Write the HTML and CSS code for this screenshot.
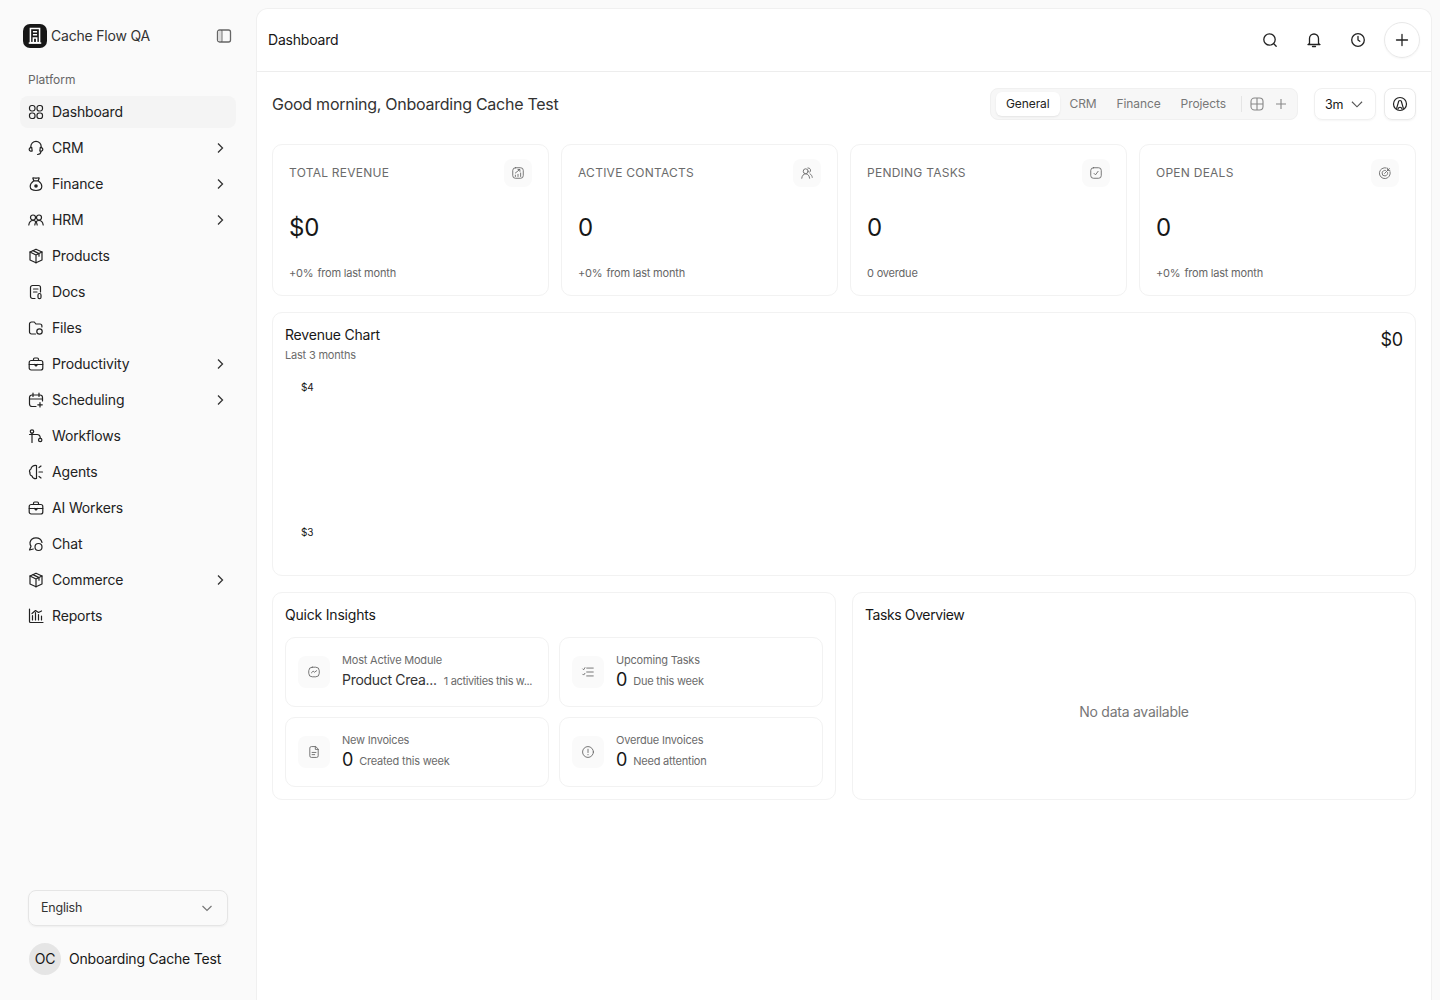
FILE: index.html
```html
<!DOCTYPE html>
<html lang="en">
<head>
  <meta charset="UTF-8">
  <meta name="viewport" content="width=device-width, initial-scale=1.0">
  <title>Dashboard</title>
  <link rel="stylesheet" href="styles.css">
</head>
<body>
  <aside class="sidebar">
    <div class="brand">
      <span class="brand-logo">
        <svg viewBox="0 0 24 24" width="20" height="20" fill="none" stroke="#fff" stroke-width="1.8"><rect x="6.500" y="3" width="11" height="17"/><path d="M9.500 7h5M9.500 10.500h5" /><path d="M10 20v-5.500h4V20" /><path d="M4.500 20.500h15" /></svg>
      </span>
      <span class="brand-name">Cache Flow QA</span>
      <svg class="collapse" viewBox="0 0 16 16" width="16" height="16" fill="none" stroke="#666" stroke-width="1.3"><rect x="1.500" y="2" width="13" height="12" rx="2"/><path d="M5.800 2v12"/><path d="M2 3h3.500v10H2z" fill="#ddd" stroke="none"/></svg>
    </div>

    <div class="nav-label">Platform</div>
    <nav class="nav">
      <a class="nav-item active">
        <svg class="nav-icon" viewBox="0 0 16 16"><rect x="1.500" y="1.500" width="5.500" height="5.500" rx="2.200"/><rect x="9" y="1.500" width="5.500" height="5.500" rx="2.200"/><rect x="1.500" y="9" width="5.500" height="5.500" rx="2.200"/><rect x="9" y="9" width="5.500" height="5.500" rx="2.200"/></svg>
        <span>Dashboard</span>
      </a>
      <a class="nav-item">
        <svg class="nav-icon" viewBox="0 0 16 16"><path d="M2.800 7.500V6.500a5.200 5.200 0 0 1 10.400 0v1"/><path d="M3.700 7.300 4.200 11c-1.400.5-2.900-.2-3-1.500-.1-1.200 1-2.200 2.500-2.200z"/><path d="M12.300 7.300 11.800 11c1.400.5 2.900-.2 3-1.500.1-1.200-1-2.200-2.500-2.200z"/><path d="M13 11.500c-.2 1.800-1.600 3-3.500 3"/></svg>
        <span>CRM</span>
        <svg class="chev" viewBox="0 0 16 16"><path d="M6 3.500 10.500 8 6 12.500"/></svg>
      </a>
      <a class="nav-item">
        <svg class="nav-icon" viewBox="0 0 16 16"><path d="M5.800 4.800 4.800 2c1-.6 1.800.2 3.200.2S10.200 1.400 11.200 2l-1 2.800"/><path d="M5.800 4.800h4.400c2 1.400 3.600 3.600 3.600 5.800 0 2.800-2.200 3.900-5.800 3.900s-5.800-1.100-5.800-3.900c0-2.200 1.600-4.400 3.600-5.800z"/><circle cx="8" cy="10" r="1.800" fill="#222" stroke="none"/></svg>
        <span>Finance</span>
        <svg class="chev" viewBox="0 0 16 16"><path d="M6 3.500 10.500 8 6 12.500"/></svg>
      </a>
      <a class="nav-item">
        <svg class="nav-icon" viewBox="0 0 16 16"><circle cx="5" cy="5.500" r="2.500"/><circle cx="11" cy="5.500" r="2.500"/><path d="M.8 13c.4-2.800 2-4.500 4.200-4.500S8.800 10.200 9.200 13"/><path d="M6.800 13c.4-2.800 2-4.500 4.200-4.500s3.800 1.700 4.200 4.500"/></svg>
        <span>HRM</span>
        <svg class="chev" viewBox="0 0 16 16"><path d="M6 3.500 10.500 8 6 12.500"/></svg>
      </a>
      <a class="nav-item">
        <svg class="nav-icon" viewBox="0 0 16 16"><path d="M8 1.200 14 4v8l-6 2.800L2 12V4z"/><path d="M2 4l6 3 6-3M8 7v7.800M5 2.600l6 3v2.600"/></svg>
        <span>Products</span>
      </a>
      <a class="nav-item">
        <svg class="nav-icon" viewBox="0 0 16 16"><path d="M7 14.500H4.500a2 2 0 0 1-2-2v-9a2 2 0 0 1 2-2h6a2 2 0 0 1 2 2V8"/><path d="M5.500 5h4.500M5.500 8H9"/><rect x="10" y="9.500" width="3" height="5.200" rx="1.500"/></svg>
        <span>Docs</span>
      </a>
      <a class="nav-item">
        <svg class="nav-icon" viewBox="0 0 16 16"><path d="M7.500 14H3.500a2 2 0 0 1-2-2V4a2 2 0 0 1 2-2h2.800l1.600 2h4a2 2 0 0 1 2 2v1"/><circle cx="11.500" cy="11.500" r="2.700"/></svg>
        <span>Files</span>
      </a>
      <a class="nav-item">
        <svg class="nav-icon" viewBox="0 0 16 16"><rect x="1.200" y="4.500" width="13.600" height="9.500" rx="2"/><path d="M5.500 4.500V3.200a1.200 1.200 0 0 1 1.200-1.200h2.600a1.200 1.200 0 0 1 1.200 1.200v1.300"/><path d="M1.200 8.500h13.600"/><path d="M6.500 8.500 8 10l1.500-1.500"/></svg>
        <span>Productivity</span>
        <svg class="chev" viewBox="0 0 16 16"><path d="M6 3.500 10.500 8 6 12.500"/></svg>
      </a>
      <a class="nav-item">
        <svg class="nav-icon" viewBox="0 0 16 16"><path d="M8 14.500H4a2.500 2.500 0 0 1-2.500-2.500V5.500A2.500 2.500 0 0 1 4 3h8a2.500 2.500 0 0 1 2.500 2.500V9"/><path d="M5 1.200v3.300M11 1.200v3.300M1.500 7h13M12 10.500v4.500M9.800 12.800h4.500"/></svg>
        <span>Scheduling</span>
        <svg class="chev" viewBox="0 0 16 16"><path d="M6 3.500 10.500 8 6 12.500"/></svg>
      </a>
      <a class="nav-item">
        <svg class="nav-icon" viewBox="0 0 16 16"><circle cx="4" cy="3.500" r="1.700"/><circle cx="12.200" cy="12" r="1.700"/><path d="M4 5.200v9.300"/><path d="M1.500 6.500H9a3 3 0 0 1 3.200 3v.8"/></svg>
        <span>Workflows</span>
      </a>
      <a class="nav-item">
        <svg class="nav-icon" viewBox="0 0 16 16"><path d="M8.500 1.500v13c-2 .5-4-.5-4.500-2.500-1.500-.5-2.500-2-2-3.500C1 7.500 1.500 5.500 3 5c0-2 2.500-4 5.500-3.500z"/><path d="M11 3.500l2-1.500M11 8h3.500M11 12.500l2 1.500"/></svg>
        <span>Agents</span>
      </a>
      <a class="nav-item">
        <svg class="nav-icon" viewBox="0 0 16 16"><rect x="1.200" y="4.500" width="13.600" height="9.500" rx="2"/><path d="M5.500 4.500V3.200a1.200 1.200 0 0 1 1.200-1.200h2.600a1.200 1.200 0 0 1 1.200 1.200v1.300"/><path d="M1.200 8.500h13.600"/><path d="M6.500 8.500 8 10l1.500-1.500"/></svg>
        <span>AI Workers</span>
      </a>
      <a class="nav-item">
        <svg class="nav-icon" viewBox="0 0 16 16"><path d="M14 6.500A6.200 6.200 0 0 0 2 6.500c-.1 1.500.3 2.700 1 3.700L1.500 14l3.800-1"/><circle cx="10.500" cy="11" r="3.500"/></svg>
        <span>Chat</span>
      </a>
      <a class="nav-item">
        <svg class="nav-icon" viewBox="0 0 16 16"><path d="M8 1.200 14 4v8l-6 2.800L2 12V4z"/><path d="M2 4l6 3 6-3M8 7v7.800M5 2.600l6 3v2.600"/></svg>
        <span>Commerce</span>
        <svg class="chev" viewBox="0 0 16 16"><path d="M6 3.500 10.500 8 6 12.500"/></svg>
      </a>
      <a class="nav-item">
        <svg class="nav-icon" viewBox="0 0 16 16"><path d="M1.500 1v12.500a1 1 0 0 0 1 1H15"/><path d="M4.500 12V7.500M7.500 12V4.500M10.500 12V6.500M13.500 12V8M4 5.500 7.500 2.500l3 2 3-1.500"/></svg>
        <span>Reports</span>
      </a>
    </nav>

    <div class="sidebar-foot">
      <div class="lang">
        <span class="lang-name">English</span>
        <svg class="lang-chev" viewBox="0 0 16 16"><path d="M3.500 6 8 10.500 12.500 6"/></svg>
      </div>
      <div class="user">
        <span class="avatar">OC</span>
        <span class="user-name">Onboarding Cache Test</span>
      </div>
    </div>
  </aside>

  <main class="main">
    <header class="topbar">
      <h1 class="page-title">Dashboard</h1>
      <div class="top-actions">
        <button class="top-btn"><svg viewBox="0 0 16 16" class="top-icon"><circle cx="7.500" cy="7.500" r="5.700"/><path d="m11.800 11.800 2.400 2.400"/></svg></button>
        <button class="top-btn"><svg viewBox="0 0 16 16" class="top-icon"><path d="M3.500 11.500V6.500a4.500 4.500 0 0 1 9 0v5l1.500 1H2z"/><path d="M6.500 14.500h3"/></svg></button>
        <button class="top-btn"><svg viewBox="0 0 16 16" class="top-icon"><circle cx="8" cy="8" r="6.300"/><path d="M8 4.500V8l1.800 1.300"/></svg></button>
        <button class="top-add"><svg viewBox="0 0 16 16" class="top-icon"><path d="M8 2.500v11M2.500 8h11"/></svg></button>
      </div>
    </header>

    <div class="content">
      <div class="welcome">
        <h2 class="greeting">Good morning, Onboarding Cache Test</h2>
        <div class="tabs">
          <button class="tab tab-on">General</button>
          <button class="tab">CRM</button>
          <button class="tab">Finance</button>
          <button class="tab">Projects</button>
          <span class="tab-sep"></span>
          <svg class="tab-icon" viewBox="0 0 16 16"><rect x="2" y="2" width="12" height="12" rx="3.500"/><path d="M8 2v12M2 8h12"/></svg>
          <svg class="tab-icon tab-plus" viewBox="0 0 16 16"><path d="M8 3v10M3 8h10"/></svg>
        </div>
        <div class="range">3m <svg class="range-chev" viewBox="0 0 16 16"><path d="M3.500 6 8 10.500 12.500 6"/></svg></div>
        <button class="ai-btn"><svg viewBox="0 0 16 16" class="ai-icon"><circle cx="8" cy="8" r="6.500"/><path d="M4.500 12.800 6.500 6a1.500 1.500 0 0 1 3 0l2 6.800"/><path d="M6 13.500c-.2-3 4.200-3 4 0"/></svg></button>
      </div>

      <section class="stats">
        <div class="card stat">
          <div class="stat-head">
            <span class="stat-label">TOTAL REVENUE</span>
            <span class="stat-icon"><svg viewBox="0 0 16 16" class="mini"><rect x="2" y="2" width="12" height="12" rx="3"/><path d="M5 12v-1.500M8 12V9.500M11 12V8M5 8l5-4M8 4h2.200v2.200"/></svg></span>
          </div>
          <div class="stat-value">$0</div>
          <div class="stat-note"><span>+0%</span><span>from last month</span></div>
        </div>
        <div class="card stat">
          <div class="stat-head">
            <span class="stat-label">ACTIVE CONTACTS</span>
            <span class="stat-icon"><svg viewBox="0 0 16 16" class="mini"><circle cx="6.500" cy="6" r="2.800"/><path d="M2 14c.3-3 2-5 4.500-5S10.700 11 11 14"/><path d="M9 2.200a2.800 2.800 0 0 1 2 5M11.500 9c1.500.8 2.300 2.300 2.500 4"/></svg></span>
          </div>
          <div class="stat-value">0</div>
          <div class="stat-note"><span>+0%</span><span>from last month</span></div>
        </div>
        <div class="card stat">
          <div class="stat-head">
            <span class="stat-label">PENDING TASKS</span>
            <span class="stat-icon"><svg viewBox="0 0 16 16" class="mini"><rect x="2" y="2" width="12" height="12" rx="3"/><path d="m5.800 8.500 1.600 1.600 3-4"/></svg></span>
          </div>
          <div class="stat-value">0</div>
          <div class="stat-note"><span>0 overdue</span></div>
        </div>
        <div class="card stat">
          <div class="stat-head">
            <span class="stat-label">OPEN DEALS</span>
            <span class="stat-icon"><svg viewBox="0 0 16 16" class="mini"><path d="M9.500 2.200A6.200 6.200 0 1 0 13.800 6.500"/><path d="M8.500 5A3.200 3.200 0 1 0 11 7.500"/><path d="M7.500 8.500 13 3M11 2.500V5h2.500"/></svg></span>
          </div>
          <div class="stat-value">0</div>
          <div class="stat-note"><span>+0%</span><span>from last month</span></div>
        </div>
      </section>

      <section class="card chart">
        <div class="chart-head">
          <div>
            <h3 class="card-title">Revenue Chart</h3>
            <p class="chart-sub">Last 3 months</p>
          </div>
          <div class="chart-total">$0</div>
        </div>
        <div class="chart-axis">
          <span>$4</span>
          <span>$3</span>
        </div>
      </section>

      <section class="bottom">
        <div class="card panel">
          <h3 class="card-title">Quick Insights</h3>
          <div class="insights">
            <div class="insight">
              <span class="insight-icon"><svg viewBox="0 0 16 16" class="mini"><rect x="2" y="2.500" width="12" height="11" rx="4"/><path d="m5 9 2-2 1.500 1.300L11 6.500"/></svg></span>
              <div class="insight-body">
                <div class="insight-label">Most Active Module</div>
                <div class="insight-row"><span class="insight-name">Product Crea...</span><span class="insight-note insight-cut">1 activities this w...</span></div>
              </div>
            </div>
            <div class="insight">
              <span class="insight-icon"><svg viewBox="0 0 16 16" class="mini"><path d="M6.500 3.500H14M6.500 8H14M6.500 12.500H14M2 4.500 3 5.500 4.500 3M2 10.500l1 1 1.500-2"/></svg></span>
              <div class="insight-body">
                <div class="insight-label">Upcoming Tasks</div>
                <div class="insight-row"><span class="insight-num">0</span><span class="insight-note">Due this week</span></div>
              </div>
            </div>
            <div class="insight">
              <span class="insight-icon"><svg viewBox="0 0 16 16" class="mini"><path d="M9.500 1.800H5a1.800 1.800 0 0 0-1.800 1.800v8.800A1.800 1.800 0 0 0 5 14.200h6a1.800 1.800 0 0 0 1.800-1.800V5z"/><path d="M9.500 1.800V5h3.300M5.800 8.500h4.400M5.800 11h3"/></svg></span>
              <div class="insight-body">
                <div class="insight-label">New Invoices</div>
                <div class="insight-row"><span class="insight-num">0</span><span class="insight-note">Created this week</span></div>
              </div>
            </div>
            <div class="insight">
              <span class="insight-icon"><svg viewBox="0 0 16 16" class="mini"><circle cx="8" cy="8" r="6.200"/><path d="M8 4.800v3.800M8 10.800v.4"/></svg></span>
              <div class="insight-body">
                <div class="insight-label">Overdue Invoices</div>
                <div class="insight-row"><span class="insight-num">0</span><span class="insight-note">Need attention</span></div>
              </div>
            </div>
          </div>
        </div>
        <div class="card panel tasks">
          <h3 class="card-title tasks-title">Tasks Overview</h3>
          <div class="empty">No data available</div>
        </div>
      </section>
    </div>
  </main>
</body>
</html>
```

FILE: styles.css
```css
/* dashboard page */
* {
  box-sizing: border-box;
}

html, body {
  height: 100%;
}

body {
  margin: 0;
  height: 1000px;
  overflow: hidden;
  display: flex;
  background-color: #fafafa;
  color: #171717;
  font-family: Inter, "Noto Sans", sans-serif;
  font-size: 14px;
  letter-spacing: -0.2px;
}

button {
  font: inherit;
  letter-spacing: inherit;
  color: inherit;
  background: none;
  border: none;
  padding: 0;
}

h1, h2, h3, p {
  margin: 0;
  font-weight: 400;
}

/* sidebar */
.sidebar {
  width: 256px;
  flex: none;
  display: flex;
  flex-direction: column;
  padding: 24px 20px 25px;
}

.brand {
  display: flex;
  align-items: center;
  height: 24px;
  margin-left: 3px;
}

.brand-logo {
  width: 24px;
  height: 24px;
  border-radius: 7px;
  background-color: #171717;
  display: flex;
  align-items: center;
  justify-content: center;
}

.brand-name {
  margin-left: 4px;
  padding-bottom: 2px;
  flex: 1;
  color: #333;
}

.collapse {
  margin-right: 4px;
}

.nav-label {
  margin: 23px 0 0 8px;
  font-size: 12px;
  line-height: 18px;
  letter-spacing: 0;
  color: #666;
}

.nav {
  margin-top: 7px;
  display: flex;
  flex-direction: column;
  gap: 4px;
}

.nav-item {
  height: 32px;
  display: flex;
  align-items: center;
  gap: 8px;
  padding: 0 8px;
  border-radius: 8px;
  color: #222;
  letter-spacing: -0.15px;
}

.nav-item span {
  padding-bottom: 2px;
}

.active {
  background-color: #f4f4f4;
}

.nav-icon {
  width: 16px;
  height: 16px;
  fill: none;
  stroke: #222;
  stroke-width: 1.2;
  stroke-linecap: round;
  stroke-linejoin: round;
}

.chev {
  width: 16px;
  height: 16px;
  margin-left: auto;
  fill: none;
  stroke: #333;
  stroke-width: 1.3;
}

.sidebar-foot {
  margin-top: auto;
}

.lang {
  margin-left: 8px;
  width: 200px;
  height: 36px;
  display: flex;
  align-items: center;
  justify-content: space-between;
  padding: 0 12px;
  border: 1px solid #e5e5e5;
  border-radius: 8px;
  box-shadow: 0 1px 2px rgba(0, 0, 0, 0.05);
  font-size: 12.5px;
  color: #333;
}

.lang-name {
  padding-bottom: 2px;
}

.lang-chev {
  width: 16px;
  height: 16px;
  fill: none;
  stroke: #777;
  stroke-width: 1.2;
}

.user {
  margin: 17px 0 0 9px;
  display: flex;
  align-items: center;
  gap: 8px;
}

.avatar {
  width: 32px;
  height: 32px;
  padding-bottom: 2px;
  border-radius: 50%;
  background-color: #e5e5e5;
  display: flex;
  align-items: center;
  justify-content: center;
}

.user-name {
  padding-bottom: 2px;
}

/* main */
.main {
  margin-top: 8px;
  width: 1176px;
  flex: none;
  background-color: #fff;
  border: 1px solid #f0f0f0;
  border-bottom: none;
  border-radius: 12px 12px 0 0;
}

.topbar {
  height: 63px;
  display: flex;
  align-items: center;
  justify-content: space-between;
  padding: 0 11px 0 11px;
  border-bottom: 1px solid #ededed;
}

.page-title {
  font-size: 14px;
  padding-bottom: 2px;
}

.top-actions {
  display: flex;
  align-items: center;
  gap: 8px;
}

.top-btn {
  width: 36px;
  height: 36px;
  display: flex;
  align-items: center;
  justify-content: center;
}

.top-add {
  width: 36px;
  height: 36px;
  border: 1px solid #e8e8e8;
  border-radius: 50%;
  display: flex;
  align-items: center;
  justify-content: center;
  box-shadow: 0 1px 2px rgba(0, 0, 0, 0.04);
}

.top-icon {
  width: 16px;
  height: 16px;
  fill: none;
  stroke: #222;
  stroke-width: 1.3;
  stroke-linecap: round;
  stroke-linejoin: round;
}

.content {
  padding: 16px 15px;
}

.welcome {
  display: flex;
  align-items: center;
  height: 32px;
}

.greeting {
  flex: 1;
  font-size: 16px;
  letter-spacing: -0.26px;
  color: #333;
}

.tabs {
  width: 308px;
  height: 32px;
  display: flex;
  align-items: center;
  padding: 0 5px;
  background-color: #f7f7f7;
  border: 1px solid #f0f0f0;
  border-radius: 8px;
}

.tab {
  height: 24px;
  padding: 0 10px 2px;
  border-radius: 6px;
  font-size: 12px;
  letter-spacing: -0.1px;
  color: #777;
}

.tab-on {
  background-color: #fff;
  color: #222;
  box-shadow: 0 1px 2px rgba(0, 0, 0, 0.08);
}

.tab-sep {
  width: 1px;
  height: 16px;
  margin: 0 7px 0 5px;
  background-color: #e5e5e5;
}

.tab-icon {
  width: 16px;
  height: 16px;
  fill: none;
  stroke: #888;
  stroke-width: 1.1;
}

.tab-plus {
  margin-left: 8px;
}

.range {
  width: 62px;
  height: 32px;
  margin-left: 16px;
  display: flex;
  align-items: center;
  gap: 4px;
  padding-left: 10px;
  border: 1px solid #f0f0f0;
  border-radius: 8px;
  font-size: 12.5px;
  box-shadow: 0 1px 2px rgba(0, 0, 0, 0.04);
}

.range-chev {
  width: 18px;
  height: 18px;
  fill: none;
  stroke: #555;
  stroke-width: 1;
  margin-left: 1px;
}

.ai-btn {
  width: 32px;
  height: 32px;
  margin-left: 8px;
  display: flex;
  align-items: center;
  justify-content: center;
  border: 1px solid #eaeaea;
  border-radius: 8px;
  box-shadow: 0 1px 2px rgba(0, 0, 0, 0.05);
}

.ai-icon {
  width: 16px;
  height: 16px;
  fill: none;
  stroke: #222;
  stroke-width: 1.2;
}

.card {
  background-color: #fff;
  border: 1px solid #f2f2f2;
  border-radius: 10px;
}

.stats {
  margin-top: 24px;
  display: grid;
  grid-template-columns: repeat(4, 277px);
  gap: 12px;
}

.stat {
  height: 152px;
  padding: 12px 16px;
}

.stat-head {
  height: 32px;
  display: flex;
  align-items: center;
  justify-content: space-between;
}

.stat-label {
  padding-bottom: 2px;
  font-size: 12px;
  color: #6b6b6b;
  letter-spacing: 0.25px;
}

.stat-icon {
  width: 28px;
  height: 28px;
  background-color: #fafafa;
  border-radius: 8px;
  display: flex;
  align-items: center;
  justify-content: center;
}

.mini {
  width: 14px;
  height: 14px;
  fill: none;
  stroke: #666;
  stroke-width: 1;
  stroke-linecap: round;
  stroke-linejoin: round;
}

.stat-value {
  margin-top: 24px;
  font-size: 24px;
  line-height: 30px;
}

.stat-note {
  margin-top: 22px;
  display: flex;
  gap: 4px;
  font-size: 11px;
  line-height: 16px;
  color: #666;
}

.chart {
  margin-top: 16px;
  height: 264px;
  padding: 12px;
}

.chart-head {
  display: flex;
  justify-content: space-between;
  align-items: flex-start;
}

.card-title {
  font-size: 14px;
  line-height: 20px;
}

.tasks-title {
  letter-spacing: -0.4px;
}

.chart-sub {
  margin-top: 2px;
  font-size: 11px;
  line-height: 16px;
  color: #6b6b6b;
}

.chart-total {
  margin-top: 4px;
  font-size: 18px;
  line-height: 22px;
}

.chart-axis {
  margin: 17px 0 0 16px;
  height: 159px;
  display: flex;
  flex-direction: column;
  justify-content: space-between;
  font-size: 10px;
  line-height: 14px;
}

.bottom {
  margin-top: 16px;
  display: grid;
  grid-template-columns: 564px 564px;
  gap: 16px;
}

.panel {
  height: 208px;
  padding: 12px;
}

.insights {
  margin-top: 12px;
  display: grid;
  grid-template-columns: 264px 264px;
  gap: 10px;
}

.insight {
  height: 70px;
  display: flex;
  align-items: center;
  gap: 12px;
  padding: 0 12px;
  border: 1px solid #f2f2f2;
  border-radius: 10px;
}

.insight-icon {
  width: 32px;
  height: 32px;
  flex: none;
  background-color: #fafafa;
  border-radius: 8px;
  display: flex;
  align-items: center;
  justify-content: center;
}

.insight-body {
  min-width: 0;
  padding-bottom: 1px;
}

.insight-label {
  font-size: 11px;
  line-height: 14px;
  color: #6b6b6b;
}

.insight-row {
  margin-top: 2px;
  display: flex;
  align-items: center;
  gap: 6px;
  height: 22px;
  white-space: nowrap;
}

.insight-name {
  margin-right: 1px;
  font-size: 14px;
  letter-spacing: -0.3px;
  color: #333;
}

.insight-num {
  font-size: 18px;
}

.insight-note {
  margin-top: 2px;
  font-size: 11px;
  color: #6b6b6b;
}

.insight-cut {
  letter-spacing: -0.35px;
}

.tasks {
  display: flex;
  flex-direction: column;
}

.empty {
  flex: 1;
  padding-top: 10px;
  display: flex;
  align-items: center;
  justify-content: center;
  letter-spacing: -0.25px;
  color: #777;
}
```
